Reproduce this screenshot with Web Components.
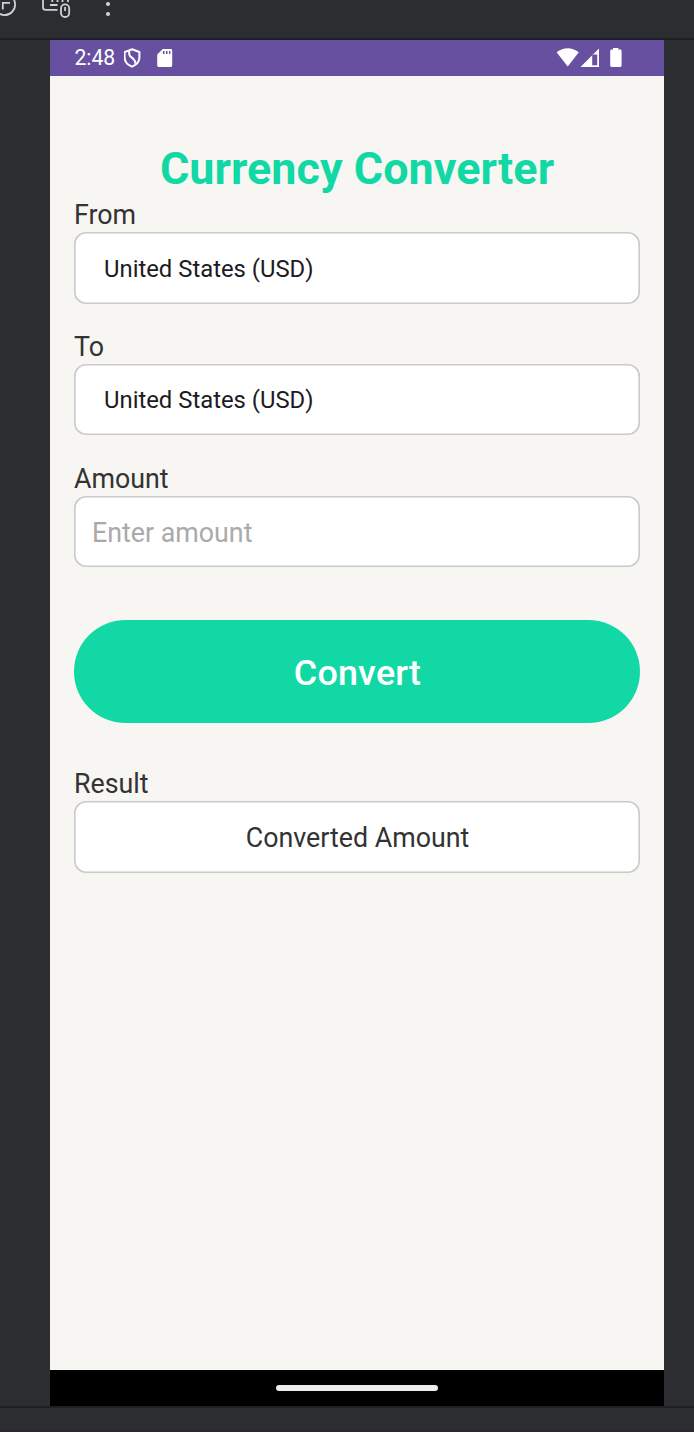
<!DOCTYPE html>
<html lang="en">
<head>
<meta charset="utf-8">
<title>Currency Converter</title>
<style>
html,body{margin:0;height:100%;background:#2b2d30;overflow:hidden}
body{font-family:Roboto,"Liberation Sans",sans-serif}
</style>
</head>
<body>
<emulator-window>
  <status-bar></status-bar>
  <app-title>Currency Converter</app-title>
  <form-field label="From" kind="select">United States (USD)</form-field>
  <form-field label="To" kind="select">United States (USD)</form-field>
  <form-field label="Amount" kind="hint">Enter amount</form-field>
  <pill-button>Convert</pill-button>
  <form-field label="Result" kind="result">Converted Amount</form-field>
</emulator-window>
<script>
const define = (name, html) => customElements.define(name, class extends HTMLElement {
  constructor() {
    super();
    this.attachShadow({mode: 'open'}).innerHTML = html;
  }
});

define('tool-strip', `
<style>
:host{display:block;height:38px;border-bottom:2px solid #1e1f22;overflow:hidden}
svg{display:block}
</style>
<svg width="130" height="38" fill="none" stroke="#ced0d6" stroke-width="1.8">
  <circle cx="4.5" cy="4.5" r="10.6"/>
  <path d="M2.8 9.5V2.8H10"/>
  <path d="M43 -4V7.2Q43 9.8 45.6 9.8H57.5M50 5H57.5M52.3 -1V2M57.5 -1V2M62.5 -1V2M68 -2V2"/>
  <rect x="61" y="4.4" width="8.2" height="12.6" rx="4"/>
  <path d="M65.1 7V11"/>
  <g fill="#ced0d6" stroke="none"><circle cx="108" cy="4" r="2.1"/><circle cx="108" cy="14" r="2.1"/></g>
</svg>`);

define('status-bar', `
<style>
:host{display:flex;height:36px;background:#6750a0;color:#fff;box-sizing:border-box;padding:0 42px 0 24px;justify-content:space-between}
div{display:flex;align-items:center}
span{font-size:21.2px;line-height:36px;width:50px;text-indent:.4px}
svg{display:block}
</style>
<div><span>2:48</span>
<svg width="50" height="36" fill="#fff">
  <path d="M8 9.2L15.4 12V18Q15 23.8 8 26.6Q1 23.8 .6 18V12Z" fill="none" stroke="#fff" stroke-width="2" style="overflow:visible"/>
  <path d="M5.2 11V14.2Q5.7 16 7.6 17.4Q10.8 19.4 11.6 23.8" fill="none" stroke="#fff" stroke-width="2"/>
  <path fill-rule="evenodd" d="M38.8 9H46.8Q48.2 9 48.2 10.4V25.6Q48.2 27 46.8 27H34.6Q33.2 27 33.2 25.6V14.6ZM39 11V14H40.5V11ZM42 11V14H43.5V11ZM45 11V14H46.4V11Z"/>
</svg></div>
<svg width="66" height="36" fill="#fff">
  <path d="M.6 12.3Q11.5 4.2 22.8 12.3L11.7 26.5Z"/>
  <path fill-rule="evenodd" d="M43 8.5V27H24.5ZM41.2 14.4H36.2V25.2H41.2Z"/>
  <path d="M57 8H62.4V9.6H64.2Q65.6 9.6 65.6 11V25.6Q65.6 27 64.2 27H55.6Q54.2 27 54.2 25.6V11Q54.2 9.6 55.6 9.6H57Z"/>
</svg>`);

define('app-title', `
<style>
:host{display:block;margin-top:66px;height:57.2px;line-height:53px;font-size:44.9px;letter-spacing:.04px;font-weight:700;text-align:center;color:#12d8a6}
</style><slot></slot>`);

customElements.define('form-field', class extends HTMLElement {
  constructor() {
    super();
    this.attachShadow({mode: 'open'}).innerHTML = `
<style>
:host{display:block;margin:0 24px 27.2px}
label{display:block;box-sizing:border-box;height:33.2px;padding-top:1.2px;line-height:31.5px;font-size:26.8px;color:#333}
.box{box-sizing:border-box;height:71.2px;box-shadow:inset 0 0 0 1.6px #cacaca;border-radius:12px;background:#fff;display:flex;align-items:center;font-size:26.8px;line-height:32px;color:#333;padding:3px 18px 0}
:host([kind=select]) .box{font-size:23.85px;color:#1c1b1f;padding:1.6px 30px 0}
:host([kind=hint]) .box{color:#aaa}
:host([kind=result]) .box{justify-content:center;height:72px;padding-left:19px}
:host([kind=result]) label{padding-top:2px}
</style>
<label></label><div class="box"><slot></slot></div>`;
  }
  connectedCallback() {
    this.shadowRoot.querySelector('label').textContent = this.getAttribute('label');
  }
});

define('pill-button', `
<style>
:host{display:block;margin:53.8px 24px 44.5px}
button{display:block;width:100%;height:102.5px;padding:3px 0 0 1px;border:0;border-radius:52px;background:#12d8a6;color:#fff;font:500 35.9px Roboto,sans-serif;letter-spacing:.2px}
</style><button><slot></slot></button>`);

define('home-bar', `
<style>
:host{display:flex;height:36px;background:#000;align-items:center;justify-content:center}
i{width:162px;height:5.6px;border-radius:3px;background:#ececec}
</style><i></i>`);

define('emulator-window', `
<style>
:host{display:flex;flex-direction:column;height:1432px}
main{display:flex;flex-direction:column;width:614px;height:1366px;margin-left:50px;background:#f7f6f2}
section{flex:1;min-height:0}
footer{flex:1;border-top:2px solid #1e1f22;border-bottom:1px solid #30242e}
</style>
<tool-strip></tool-strip>
<main><section><slot></slot></section><home-bar></home-bar></main>
<footer></footer>`);
</script>
</body>
</html>
